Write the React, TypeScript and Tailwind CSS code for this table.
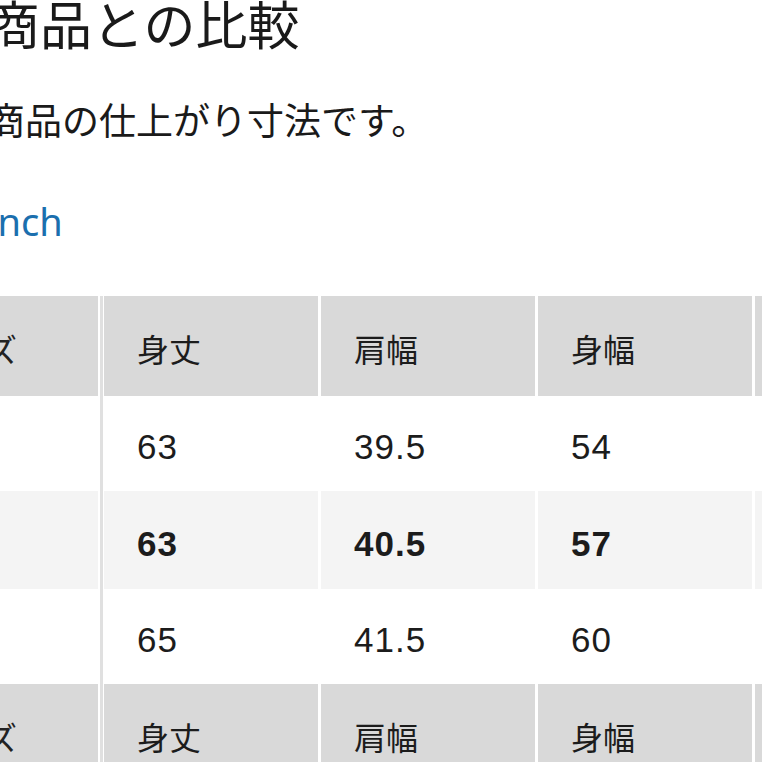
import React from 'react'

const font = { fontFamily: '"Noto Sans", "Noto Sans CJK JP", sans-serif' }
const numFont = { fontFamily: '"Liberation Sans", "Noto Sans CJK JP", sans-serif' }

type Row = { kind: 'head' | 'plain' | 'alt'; cells: string[]; bold?: boolean }

const rows: Row[] = [
  { kind: 'head', cells: ['身丈', '肩幅', '身幅', ''] },
  { kind: 'plain', cells: ['63', '39.5', '54', ''] },
  { kind: 'alt', cells: ['63', '40.5', '57', ''], bold: true },
  { kind: 'plain', cells: ['65', '41.5', '60', ''] },
  { kind: 'head', cells: ['身丈', '肩幅', '身幅', ''] },
]

function TableRow({ row }: { row: Row }) {
  const head = row.kind === 'head'
  const bg = head ? 'bg-[#d9d9d9]' : row.kind === 'alt' ? 'bg-[#f4f4f4]' : 'bg-white'
  const h = head ? 'h-[100px]' : row.kind === 'alt' ? 'h-[98px]' : 'h-[95px]'
  return (
    <div className={`flex ${h} shrink-0`}>
      {/* first column, mostly cut off */}
      <div className={`w-[98px] shrink-0 overflow-hidden ${bg} flex items-center`}>
        {head && (
          <span className="ml-[-78px] mt-[8px] whitespace-nowrap text-[32px] text-[#222]">サイズ</span>
        )}
      </div>
      {/* fixed column divider */}
      <div className="w-[6px] shrink-0 flex">
        <div className="ml-[2px] w-[3px] bg-[#e0e0e0]" />
      </div>
      <div className="flex gap-[3px]">
        {row.cells.map((c, i) => (
          <div
            key={i}
            className={`w-[214px] shrink-0 ${bg} flex items-center pl-[33px] pt-[8px] text-[#1c1c1c] ${
              head ? 'text-[32px]' : 'text-[35px] tracking-[1px]'
            } ${row.bold ? 'font-bold' : ''}`}
            style={head ? undefined : numFont}
          >
            {c}
          </div>
        ))}
      </div>
    </div>
  )
}

export default function App() {
  return (
    <div className="w-[762px] h-[762px] overflow-hidden bg-white flex flex-col" style={font}>
      <h1 className="ml-[-12px] h-[56px] leading-[50px] text-[52px] font-normal whitespace-nowrap text-[#1a1a1a]">
        商品との比較
      </h1>
      <p className="mt-[49px] ml-[-12px] h-[44px] leading-[44px] text-[37px] whitespace-nowrap text-[#1a1a1a]">
        商品の仕上がり寸法です。
      </p>
      <a className="mt-[53px] ml-[-100px] h-[50px] leading-[50px] text-[38px] whitespace-nowrap text-[#1b6fae]">
        cm / inch
      </a>
      <div className="mt-[50px] flex flex-col">
        {rows.map((r, i) => (
          <TableRow key={i} row={r} />
        ))}
      </div>
    </div>
  )
}
